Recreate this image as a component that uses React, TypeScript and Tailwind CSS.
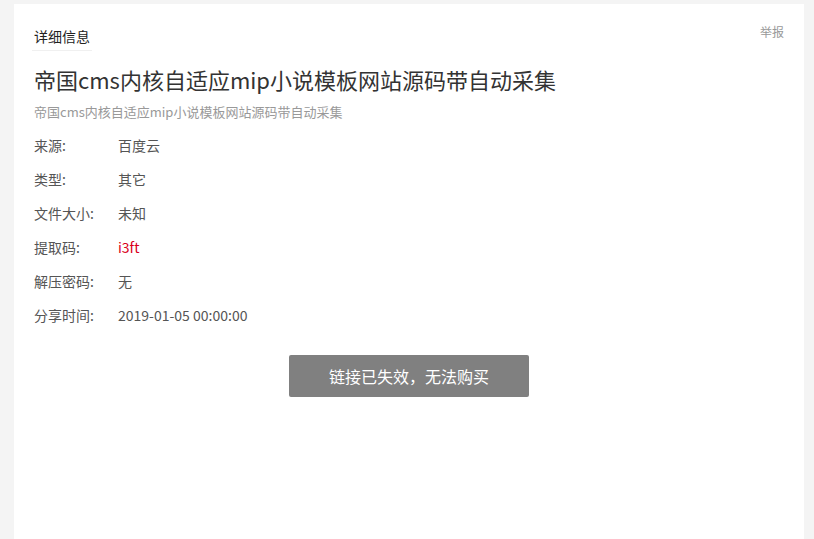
import React from 'react';

const rows = [
  { label: '来源:', value: '百度云' },
  { label: '类型:', value: '其它' },
  { label: '文件大小:', value: '未知' },
  { label: '提取码:', value: 'i3ft', red: true },
  { label: '解压密码:', value: '无' },
  { label: '分享时间:', value: '2019-01-05 00:00:00' },
];

const App: React.FC = () => {
  return (
    <div
      className="min-h-screen bg-[#f4f4f4] pl-[14px] pt-[4px]"
      style={{ fontFamily: '"Noto Sans CJK SC", "Noto Sans", sans-serif' }}
    >
      <div className="w-[790px] min-h-[535px] bg-white px-5 pt-5">
        {/* Header */}
        <div className="flex items-start justify-between">
          <div className="-ml-[2px] px-[2px] pb-[2px] border-b border-[#f0f0f0] text-[14px] leading-[24px] text-[#222]">
            详细信息
          </div>
          <a className="text-[12px] leading-[16px] text-[#999] cursor-pointer">举报</a>
        </div>

        {/* Title */}
        <h1 className="mt-[12px] text-[22px] leading-[32px] text-[#333]">
          帝国cms内核自适应mip小说模板网站源码带自动采集
        </h1>
        <p className="mt-[7px] text-[13px] leading-[20px] text-[#999]">
          帝国cms内核自适应mip小说模板网站源码带自动采集
        </p>

        {/* Details */}
        <div className="mt-[6px] flex flex-col">
          {rows.map((row) => (
            <div key={row.label} className="flex text-[14px] leading-[34px]">
              <span className="w-[84px] text-[#555]">{row.label}</span>
              <span className={row.red ? 'text-[#d9001b]' : 'text-[#555]'}>{row.value}</span>
            </div>
          ))}
        </div>

        {/* Action */}
        <div className="mt-[23px] flex justify-center">
          <button className="w-[240px] h-[42px] rounded-[2px] bg-[#808080] text-[16px] text-white">
            链接已失效，无法购买
          </button>
        </div>
      </div>
    </div>
  );
};

export default App;
